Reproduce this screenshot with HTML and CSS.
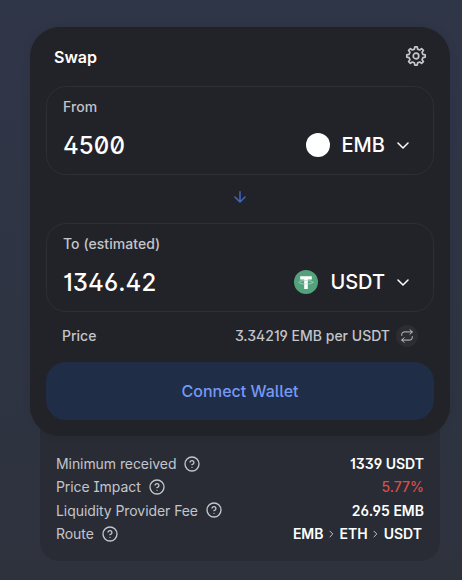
FILE: index.html
```html
<!DOCTYPE html>
<html lang="en">
<head>
  <meta charset="UTF-8" />
  <meta name="viewport" content="width=device-width, initial-scale=1.0"/>
  <title>Swap</title>
  <link rel="stylesheet" href="styles.css">
</head>
<body>

  <!-- Icon shared by the detail rows -->
  <svg class="icon-defs" width="0" height="0">
    <symbol id="help" viewBox="0 0 24 24">
      <circle cx="12" cy="12" r="10.5"/>
      <path d="M9.09 9a3 3 0 0 1 5.83 1c0 2-3 3-3 3"/>
      <path d="M12 17h.01"/>
    </symbol>
  </svg>

  <!-- Swap Card -->
  <main class="card">
    <header class="card-header">
      <h1>Swap</h1>
      <button type="button" class="settings-btn" aria-label="Settings">
        <svg class="icon" width="22" height="22" viewBox="0 0 22 22">
          <path d="M9.4 4.1L9.8 1.8H12.2L12.6 4.1L14.75 5L16.6 3.6L18.4 5.4L17 7.25L17.9 9.4L20.2 9.8V12.2L17.9 12.6L17 14.75L18.4 16.6L16.6 18.4L14.75 17L12.6 17.9L12.2 20.2H9.8L9.4 17.9L7.25 17L5.4 18.4L3.6 16.6L5 14.75L4.1 12.6L1.8 12.2V9.8L4.1 9.4L5 7.25L3.6 5.4L5.4 3.6L7.25 5Z"/>
          <circle cx="11" cy="11" r="2.8"/>
        </svg>
      </button>
    </header>

    <section class="panel">
      <div class="panel-label">From</div>
      <div class="panel-row">
        <span class="amount">4500</span>
        <button type="button" class="token-btn">
          <span class="token-logo"></span>
          <span class="token-name">EMB</span>
          <svg class="chevron" width="12" height="7" viewBox="0 0 12 7"><path d="M1 1l5 5 5-5"/></svg>
        </button>
      </div>
    </section>

    <div class="direction">
      <svg width="12" height="12" viewBox="0 0 12 12"><path d="M6 .8v10.2M1 6l5 5 5-5"/></svg>
    </div>

    <section class="panel">
      <div class="panel-label">To (estimated)</div>
      <div class="panel-row">
        <span class="amount">1346.42</span>
        <button type="button" class="token-btn">
          <svg width="24" height="24" viewBox="0 0 24 24">
            <circle cx="12" cy="12" r="12" fill="#53a27e"/>
            <path d="M6.2 6.3h11.6v3.2h-4V19h-3.6V9.5h-4z" fill="#fff"/>
            <ellipse cx="12" cy="12.3" rx="7" ry="1.8" fill="none" stroke="#b9dccb" stroke-width=".7"/>
          </svg>
          <span class="token-name">USDT</span>
          <svg class="chevron" width="12" height="7" viewBox="0 0 12 7"><path d="M1 1l5 5 5-5"/></svg>
        </button>
      </div>
    </section>

    <div class="price">
      <span>Price</span>
      <span class="price-value">3.34219 EMB per USDT</span>
      <button type="button" class="invert-btn" aria-label="Invert price">
        <svg class="icon" width="14" height="14" viewBox="0 0 24 24">
          <path d="M17 1l4 4-4 4M3 11V9a4 4 0 0 1 4-4h14M7 23l-4-4 4-4M21 13v2a4 4 0 0 1-4 4H3"/>
        </svg>
      </button>
    </div>

    <button type="button" class="connect-btn">Connect Wallet</button>
  </main>

  <!-- Trade Details -->
  <section class="details">
    <div class="detail">
      <span class="detail-label">Minimum received</span>
      <svg class="help"><use href="#help"/></svg>
      <span class="detail-value">1339 USDT</span>
    </div>
    <div class="detail">
      <span class="detail-label">Price Impact</span>
      <svg class="help"><use href="#help"/></svg>
      <span class="detail-value high-impact">5.77%</span>
    </div>
    <div class="detail">
      <span class="detail-label">Liquidity Provider Fee</span>
      <svg class="help"><use href="#help"/></svg>
      <span class="detail-value">26.95 EMB</span>
    </div>
    <div class="detail">
      <span class="detail-label">Route</span>
      <svg class="help"><use href="#help"/></svg>
      <span class="detail-value route">
        EMB
        <svg width="5" height="8" viewBox="0 0 5 8"><path d="M1 1.2L3.8 4 1 6.8"/></svg>
        ETH
        <svg width="5" height="8" viewBox="0 0 5 8"><path d="M1 1.2L3.8 4 1 6.8"/></svg>
        USDT
      </span>
    </div>
  </section>

</body>
</html>
```
FILE: styles.css
```css
* {
  box-sizing: border-box;
}

body {
  margin: 0;
  height: 580px;
  padding: 27px 12px 0 30px;
  overflow: hidden;
  font-family: 'Inter', sans-serif;
  font-feature-settings: 'ss01' on, 'ss02' on, 'cv01' on, 'cv03' on;
  background: linear-gradient(to bottom, #2f3648, #2f3443 60%, #2e323d);
  color: #fff;
}

button {
  border: none;
  padding: 0;
  background: none;
  color: inherit;
  font: inherit;
  font-feature-settings: inherit;
  cursor: pointer;
}

svg {
  display: block;
  fill: none;
  stroke-linecap: round;
  stroke-linejoin: round;
}

.icon-defs {
  position: absolute;
}

.card {
  position: relative;
  z-index: 1;
  width: 420px;
  height: 409px;
  padding: 0 16px;
  border-radius: 30px;
  background-color: #222328;
  box-shadow: 0 0 10px rgba(0, 0, 0, 0.08);
}

.card-header {
  display: flex;
  justify-content: space-between;
  align-items: center;
  height: 59px;
  padding: 0 7px 2px 8px;
}

h1 {
  margin: 0;
  padding-top: 2px;
  font-size: 16px;
  font-weight: 600;
}

.icon {
  stroke: #c3c5cb;
  stroke-width: 1.7;
}

.panel {
  height: 89px;
  border: 1px solid #2d2f36;
  border-radius: 20px;
  padding: 11px 24px 0 16px;
}

.panel-label {
  height: 18px;
  line-height: 18px;
  font-size: 14px;
  font-weight: 500;
  letter-spacing: 0.05px;
  color: #c3c5cb;
}

.panel-row {
  display: flex;
  justify-content: space-between;
  align-items: center;
  height: 58px;
}

.amount {
  font-size: 24px;
  font-weight: 500;
  letter-spacing: 0.1px;
}

.token-btn {
  display: flex;
  align-items: center;
}

.token-logo {
  width: 24px;
  height: 24px;
  border-radius: 50%;
  background-color: #fff;
}

.token-name {
  margin: 0 12px;
  font-size: 20px;
  font-weight: 500;
}

.chevron {
  stroke: #fff;
  stroke-width: 1.5;
}

.direction {
  display: flex;
  justify-content: center;
  align-items: center;
  height: 48px;
  padding-bottom: 4px;
}

.direction svg {
  stroke: #4166bd;
  stroke-width: 1.5;
}

.price {
  display: flex;
  align-items: center;
  height: 50px;
  padding: 0 16px 3px;
  font-size: 14px;
  font-weight: 500;
  color: #c3c5cb;
}

.price-value {
  margin-left: auto;
}

.invert-btn {
  display: flex;
  justify-content: center;
  align-items: center;
  width: 22px;
  height: 22px;
  margin-left: 6px;
  border-radius: 50%;
  background-color: #2b2d33;
}

.connect-btn {
  width: 100%;
  height: 58px;
  border-radius: 20px;
  background-color: #202d47;
  color: #7699f5;
  font-size: 16px;
  font-weight: 500;
}

.details {
  width: 400px;
  height: 145px;
  margin: -20px 0 0 10px;
  padding: 36px 16px 0;
  border-radius: 0 0 20px 20px;
  background-color: #292c35;
}

.detail {
  display: flex;
  align-items: center;
  height: 23.3px;
  font-size: 14px;
  color: #c3c5cb;
}

.detail-label {
  letter-spacing: -0.07px;
}

.help {
  width: 16px;
  height: 16px;
  margin-left: 8px;
  stroke: #c3c5cb;
  stroke-width: 2;
}

.detail-value {
  margin-left: auto;
  font-weight: 600;
  color: #fff;
}

.high-impact {
  font-weight: 500;
  color: #d94c49;
}

.route {
  display: flex;
  align-items: center;
  gap: 5.5px;
  padding-right: 2px;
}

.route svg {
  stroke: #c3c5cb;
}
```
